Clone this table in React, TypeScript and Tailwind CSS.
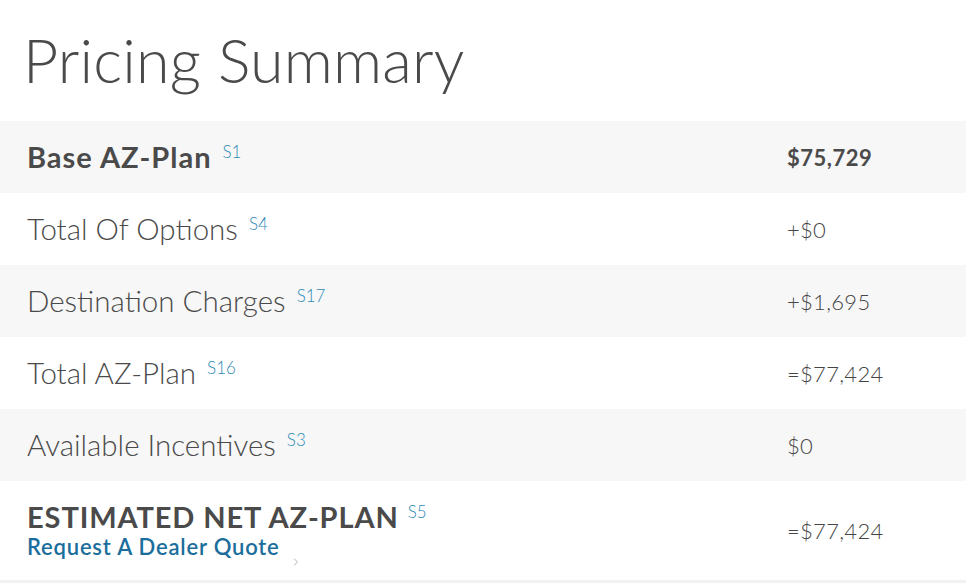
import { ChevronRight } from 'lucide-react';

type Row = { label: string; note: string; value: string; bold?: boolean };

const ROWS: Row[] = [
  { label: 'Base AZ-Plan', note: 'S1', value: '$75,729', bold: true },
  { label: 'Total Of Options', note: 'S4', value: '+$0' },
  { label: 'Destination Charges', note: 'S17', value: '+$1,695' },
  { label: 'Total AZ-Plan', note: 'S16', value: '=$77,424' },
  { label: 'Available Incentives', note: 'S3', value: '$0' },
];

export default function App() {
  return (
    <div className="w-[966px] h-[586px] bg-white text-[#4a4a4a] overflow-hidden" style={{ fontFamily: 'Lato, "Open Sans", sans-serif' }}>
      {/* Heading */}
      <h1 className="h-[121px] pl-[23px] pt-[25px] text-[61px] font-light leading-[70px] tracking-[0.2px]">
        Pricing Summary
      </h1>

      {/* Rows */}
      {ROWS.map((row, i) => (
        <div
          key={row.label}
          className={`flex items-center h-[72px] ${i % 2 === 0 ? 'bg-[#f7f7f7]' : 'bg-white'}`}
        >
          <div className="flex-1 pl-[27px] flex items-start">
            <span
              className={
                row.bold
                  ? 'text-[29px] leading-8 font-bold tracking-[1px]'
                  : 'text-[29.5px] leading-8 font-light'
              }
            >
              {row.label}
            </span>
            <span className="ml-[11px] mt-[-2px] text-[17px] font-light text-[#2f8ab5]">{row.note}</span>
          </div>
          <div className={`w-[179px] text-[22px] ${row.bold ? 'font-bold tracking-[0.5px]' : 'font-light tracking-[0.3px] text-[#444]'}`}>
            {row.value}
          </div>
        </div>
      ))}

      {/* Net total */}
      <div className="flex items-center h-[102px] border-b-[3px] border-[#f2f2f2]">
        <div className="flex-1 pl-[27px]">
          <div className="flex items-start">
            <span className="text-[29px] font-bold leading-8 tracking-[0.9px]">ESTIMATED NET AZ-PLAN</span>
            <span className="ml-[9px] mt-[-2px] text-[17px] font-light text-[#2f8ab5]">S5</span>
          </div>
          <div className="flex items-end">
            <a className="text-[22px] font-semibold text-[#1b6e9c] leading-7 tracking-[0.8px]">Request A Dealer Quote</a>
            <ChevronRight className="ml-[10px] mb-[-7px] w-3 h-3 text-[#9a9a9a]" strokeWidth={1.5} />
          </div>
        </div>
        <div className="w-[179px] text-[22px] font-light tracking-[0.3px] text-[#444]">=$77,424</div>
      </div>
    </div>
  );
}
